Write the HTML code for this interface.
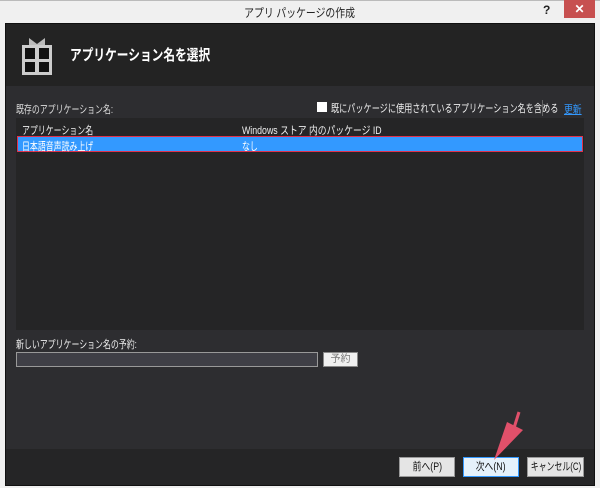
<!DOCTYPE html>
<html><head><meta charset="utf-8"><style>
*{margin:0;padding:0;box-sizing:border-box}
body{width:600px;height:488px;background:#f0f0f0;font-family:"Liberation Sans","Noto Sans CJK JP",sans-serif;position:relative;overflow:hidden;font-size:11px}
.a{position:absolute;white-space:nowrap}
.n{transform:scaleX(0.72);transform-origin:0 0}
.b span{display:inline-block;transform:scaleX(0.8)}
</style></head><body>
<div class="a" style="left:0;top:0;width:600px;height:24px;background:#f0f0f0;border-top:1px solid #bbb"></div>
<div class="a" style="left:0;top:4px;width:600px;text-align:center;font-size:12px;color:#222"><span style="display:inline-block;transform:scaleX(0.82)">アプリ パッケージの作成</span></div>
<div class="a" style="left:543px;top:3px;font-size:12px;font-weight:bold;color:#222">?</div>
<div class="a" style="left:564px;top:0;width:31px;height:18px;background:#c75050;color:#fff;text-align:center;font-size:12px;line-height:18px;font-weight:bold">✕</div>
<div class="a" style="left:5px;top:23px;width:590px;height:463px;background:#2d2d30;border:1px solid #111"></div>
<div class="a" style="left:6px;top:24px;width:588px;height:62px;background:#232323"></div>
<svg class="a" style="left:20px;top:36px" width="34" height="40"><path d="M9 2 L17 8 L25 2 L25 9 L9 9Z" fill="#bbb"/><rect x="2" y="9" width="30" height="30" fill="#ccc"/><rect x="5" y="12" width="10" height="11" fill="#111"/><rect x="19" y="12" width="10" height="11" fill="#111"/><rect x="5" y="26" width="10" height="10" fill="#111"/><rect x="19" y="26" width="10" height="10" fill="#111"/></svg>
<div class="a n" style="left:70px;top:44px;font-size:15px;font-weight:bold;color:#fff;transform:scaleX(0.78)">アプリケーション名を選択</div>
<div class="a n" style="left:16px;top:101px;color:#ddd">既存のアプリケーション名:</div>
<div class="a" style="left:317px;top:102px;width:10px;height:10px;background:#fff"></div>
<div class="a n" style="left:331px;top:100px;color:#eee;transform:scaleX(0.74)">既にパッケージに使用されているアプリケーション名を含める</div>
<div class="a" style="left:542px;top:100px;width:1px;height:16px;background:#666"></div>
<div class="a n" style="left:564px;top:101px;color:#3399ff;text-decoration:underline;transform:scaleX(0.8)">更新</div>
<div class="a" style="left:16px;top:118px;width:568px;height:212px;background:#252526"></div>
<div class="a n" style="left:22px;top:122px;color:#eee">アプリケーション名</div>
<div class="a n" style="left:242px;top:122px;color:#eee;transform:scaleX(0.8)">Windows ストア 内のパッケージ ID</div>
<div class="a" style="left:17px;top:136px;width:566px;height:16px;background:#3399ff;border:1px solid #e0314b"></div>
<div class="a n" style="left:22px;top:138px;color:#fff">日本語音声読み上げ</div>
<div class="a n" style="left:242px;top:138px;color:#fff">なし</div>
<div class="a n" style="left:16px;top:336px;color:#eee">新しいアプリケーション名の予約:</div>
<div class="a" style="left:16px;top:352px;width:302px;height:15px;background:#3f3f46;border:1px solid #999"></div>
<div class="a" style="left:323px;top:352px;width:35px;height:15px;background:#f0f0f0;border:1px solid #888;font-size:10px;color:#777;text-align:center;line-height:13px">予約</div>
<div class="a" style="left:6px;top:449px;width:588px;height:36px;background:#252526"></div>
<div class="a b" style="left:399px;top:457px;width:56px;height:20px;background:#e5e5e5;border:1px solid #999;text-align:center;line-height:18px;color:#111"><span>前へ(P)</span></div>
<div class="a b" style="left:463px;top:457px;width:56px;height:20px;background:#e5f1fb;border:1px solid #3399ff;text-align:center;line-height:18px;color:#111"><span>次へ(N)</span></div>
<div class="a" style="left:527px;top:457px;width:57px;height:20px;background:#e5e5e5;border:1px solid #999;line-height:18px;color:#111;overflow:hidden"><span style="position:absolute;left:50%;top:0;transform:translateX(-50%) scaleX(0.72)">キャンセル(C)</span></div>
<svg class="a" style="left:480px;top:410px" width="50" height="55"><path d="M39 2 L34 18" stroke="#e0506a" stroke-width="3"/><path d="M27 12 L43 20 L14 50Z" fill="#e0506a"/></svg>
</body></html>
